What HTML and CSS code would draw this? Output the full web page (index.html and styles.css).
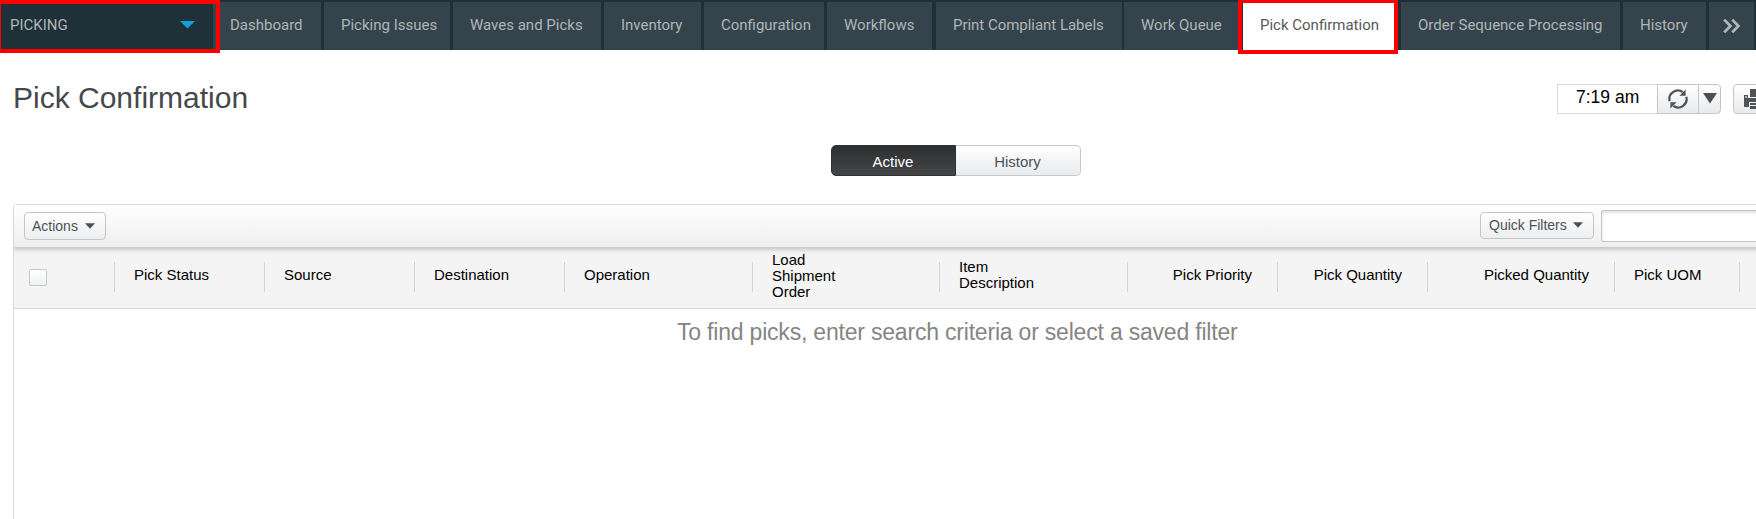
FILE: index.html
```
<!DOCTYPE html>
<html lang="en">
<head>
<meta charset="utf-8">
<title>Pick Confirmation</title>
<link rel="stylesheet" href="styles.css">
</head>
<body>
<nav class="nav">
  <a class="menu">PICKING<svg class="menu-arrow" width="15" height="8" viewBox="0 0 15 8"><path d="M0 0h15L7.5 7.5z" fill="#0f9fdc"/></svg></a>
  <a class="tab">Dashboard</a>
  <a class="tab">Picking Issues</a>
  <a class="tab">Waves and Picks</a>
  <a class="tab">Inventory</a>
  <a class="tab">Configuration</a>
  <a class="tab tab-wide-gap">Workflows</a>
  <a class="tab tab-thin-gap">Print Compliant Labels</a>
  <a class="tab">Work Queue</a>
  <a class="tab tab-active">Pick Confirmation</a>
  <a class="tab">Order Sequence Processing</a>
  <a class="tab">History</a>
  <a class="tab tab-more"><svg width="20" height="16" viewBox="0 0 20 16"><path d="M2.2 1.6L8.4 8l-6.2 6.4M10.2 1.6L16.4 8l-6.2 6.4" fill="none" stroke="#b0b5b7" stroke-width="2.8"/></svg></a>
  <span class="mark mark-menu"></span>
  <span class="mark mark-tab"></span>
</nav>
<header class="head">
  <h1 class="title">Pick Confirmation</h1>
  <div class="tools">
    <div class="time">7:19 am</div>
    <button class="tool refresh"><svg width="20" height="20" viewBox="0 0 20 20"><g fill="none" stroke="#505354" stroke-width="2.2"><path d="M1.7 12.3A8.5 8.5 0 0 1 14.6 3"/><path d="M18.3 7.7A8.5 8.5 0 0 1 5.4 17"/></g><path d="M17.6.4v6.4h-6.2z M2.4 19.6v-6.4h6.2z" fill="#505354"/></svg></button>
    <button class="tool drop"><svg width="14" height="11" viewBox="0 0 14 11"><path d="M0 0h14L7 10.5z" fill="#4d5051"/></svg></button>
    <button class="tool print"><svg width="26" height="20" viewBox="0 0 26 20"><path d="M6 0h14v8H6zM0 6h4v3h18V6h4v12h-5v-5H5v5H0zM6 14h14v2H6zM6 17h14v3H6z" fill="#505354"/><path d="M1.3 7.3h1.5v1.5H1.3z" fill="#f4f4f4"/></svg></button>
  </div>
</header>
<div class="switch">
  <button class="switch-item switch-on">Active</button>
  <button class="switch-item">History</button>
</div>
<section class="panel">
  <div class="bar">
    <button class="btn actions">Actions<svg class="caret" width="10" height="6" viewBox="0 0 10 6"><path d="M0 .3h10L5 5.7z" fill="#4d5051"/></svg></button>
    <button class="btn filters">Quick Filters<svg class="caret" width="10" height="6" viewBox="0 0 10 6"><path d="M0 .3h10L5 5.7z" fill="#4d5051"/></svg></button>
    <input class="search" type="text" aria-label="Search">
  </div>
  <div class="cols">
    <div class="col col-check"><span class="check"></span></div>
    <div class="col">Pick Status</div>
    <div class="col">Source</div>
    <div class="col">Destination</div>
    <div class="col">Operation</div>
    <div class="col col-tall">Load<br>Shipment<br>Order</div>
    <div class="col">Item<br>Description</div>
    <div class="col num">Pick Priority</div>
    <div class="col num">Pick Quantity</div>
    <div class="col num">Picked Quantity</div>
    <div class="col">Pick UOM</div>
    <div class="col"></div>
  </div>
  <p class="message">To find picks, enter search criteria or select a saved filter</p>
</section>
</body>
</html>
```
FILE: styles.css
```
* { box-sizing: border-box; }
body {
  margin: 0;
  width: 1756px;
  height: 519px;
  overflow: hidden;
  display: flex;
  flex-direction: column;
  background: #fff;
  font-family: "Liberation Sans", Arial, sans-serif;
}
button { font-family: inherit; padding: 0; margin: 0; }
.nav {
  position: relative;
  flex: none;
  display: grid;
  grid-template-columns: 213px 111px 129px 151px 100px 123px 109px 188px 119px 158px 222px 86px 47px;
  height: 50px;
  padding-top: 2px;
  background: #1f3138;
  font-family: Roboto, sans-serif;
  font-size: 15px;
  color: #b0b5b7;
}
.menu {
  display: flex;
  align-items: center;
  justify-content: space-between;
  padding: 0 18px 2px 10px;
}
.tab {
  display: flex;
  align-items: center;
  padding: 0 0 2px 17px;
  white-space: nowrap;
  background: #35444c;
  border-right: 3px solid #1f3138;
}
.tab-wide-gap { border-right-width: 4px; }
.tab-thin-gap { border-right-width: 2px; letter-spacing: -.03px; }
.tab-active { background: #fff; color: #55595b; }
.tab-more { padding-left: 13px; padding-bottom: 0; border-right-width: 2px; }
.mark { position: absolute; border: 4px solid #fe0000; pointer-events: none; }
.mark-menu { left: -3px; top: 0; width: 223px; height: 53px; }
.mark-tab { left: 1238px; top: -1px; width: 160px; height: 55px; }
.head {
  flex: none;
  display: flex;
  justify-content: space-between;
  padding: 34px 0 0 13px;
  height: 95px;
}
.title { margin: -4px 0 0; font-size: 30px; line-height: 36px; font-weight: 400; color: #44494c; }
.tools { display: flex; flex: none; height: 30px; width: 199px; }
.time {
  flex: none;
  width: 100px;
  border: 1px solid #d9d9d9;
  border-right: 0;
  padding-left: 18px;
  font-size: 17.5px;
  line-height: 25px;
  color: #000;
  white-space: nowrap;
}
.tool {
  flex: none;
  display: flex;
  align-items: center;
  justify-content: center;
  border: 1px solid #c4c6c8;
  background: linear-gradient(#fff, #e9eaec);
}
.refresh { width: 42px; }
.drop { width: 23px; margin-left: -1px; border-radius: 0 4px 4px 0; padding-bottom: 2px; }
.print { width: 48px; margin-left: 12px; border-radius: 4px; }
.switch { flex: none; display: flex; width: 250px; height: 31px; margin-left: 831px; }
.switch-item {
  width: 125px;
  border: 1px solid #c6c8ca;
  border-left: 0;
  border-radius: 0 5px 5px 0;
  background: linear-gradient(#fff, #e9eaec);
  font-size: 15px;
  color: #4d5156;
  padding: 1px 1px 0 0;
}
.switch-on {
  border: 1px solid #2f3234;
  border-radius: 5px 0 0 5px;
  background: linear-gradient(#2d2f30, #434547);
  color: #fff;
}
.panel {
  flex: none;
  margin: 28px 0 0 13px;
  width: 1760px;
  height: 330px;
  border: 1px solid #dadada;
  border-radius: 3px 0 0 0;
}
.bar {
  position: relative;
  display: flex;
  height: 42px;
  padding: 5px 0 0 10px;
  background: linear-gradient(#fff, #eee);
  box-shadow: 0 1px 5px 1px rgba(0, 0, 0, .24);
  clip-path: inset(0 0 -8px 0);
}
.btn {
  flex: none;
  display: flex;
  align-items: center;
  justify-content: space-between;
  margin-top: 2px;
  padding: 0 10px 1px 7px;
  border: 1px solid #c3c6c8;
  border-radius: 4px;
  background: linear-gradient(#fff, #eceef0);
  font-size: 14px;
  color: #4d5156;
  white-space: nowrap;
}
.actions { width: 82px; height: 28px; }
.filters { width: 114px; height: 27px; margin-left: 1374px; padding-left: 8px; }
.search {
  flex: none;
  width: 200px;
  height: 32px;
  margin-left: 7px;
  border: 1px solid #c4c4c4;
  border-radius: 2px;
  background: #fff;
  box-shadow: inset 0 2px 3px rgba(0, 0, 0, .12);
}
.cols {
  display: grid;
  grid-template-columns: 101px 150px 150px 150px 188px 187px 188px 150px 150px 187px 125px 1fr;
  height: 62px;
  background: #f4f4f4;
  border-bottom: 1px solid #d9d9d9;
  font-size: 15px;
  line-height: 16px;
  color: #000;
}
.col {
  display: flex;
  align-items: center;
  padding: 0 0 5px 19px;
  background: linear-gradient(#d4d4d4, #d4d4d4) no-repeat right 15px / 1px 30px;
}
.col-tall { padding-bottom: 3px; }
.num { justify-content: flex-end; padding-right: 26px; }
.col-check { padding: 0 0 1px 15px; }
.check { width: 18px; height: 17px; border: 1px solid #c5c7c8; border-radius: 2px; background: linear-gradient(#fff, #f0f1f2); }
.message { margin: 9px 0 0 663px; font-size: 23px; line-height: 28px; letter-spacing: -.2px; color: #858585; white-space: nowrap; }
```
